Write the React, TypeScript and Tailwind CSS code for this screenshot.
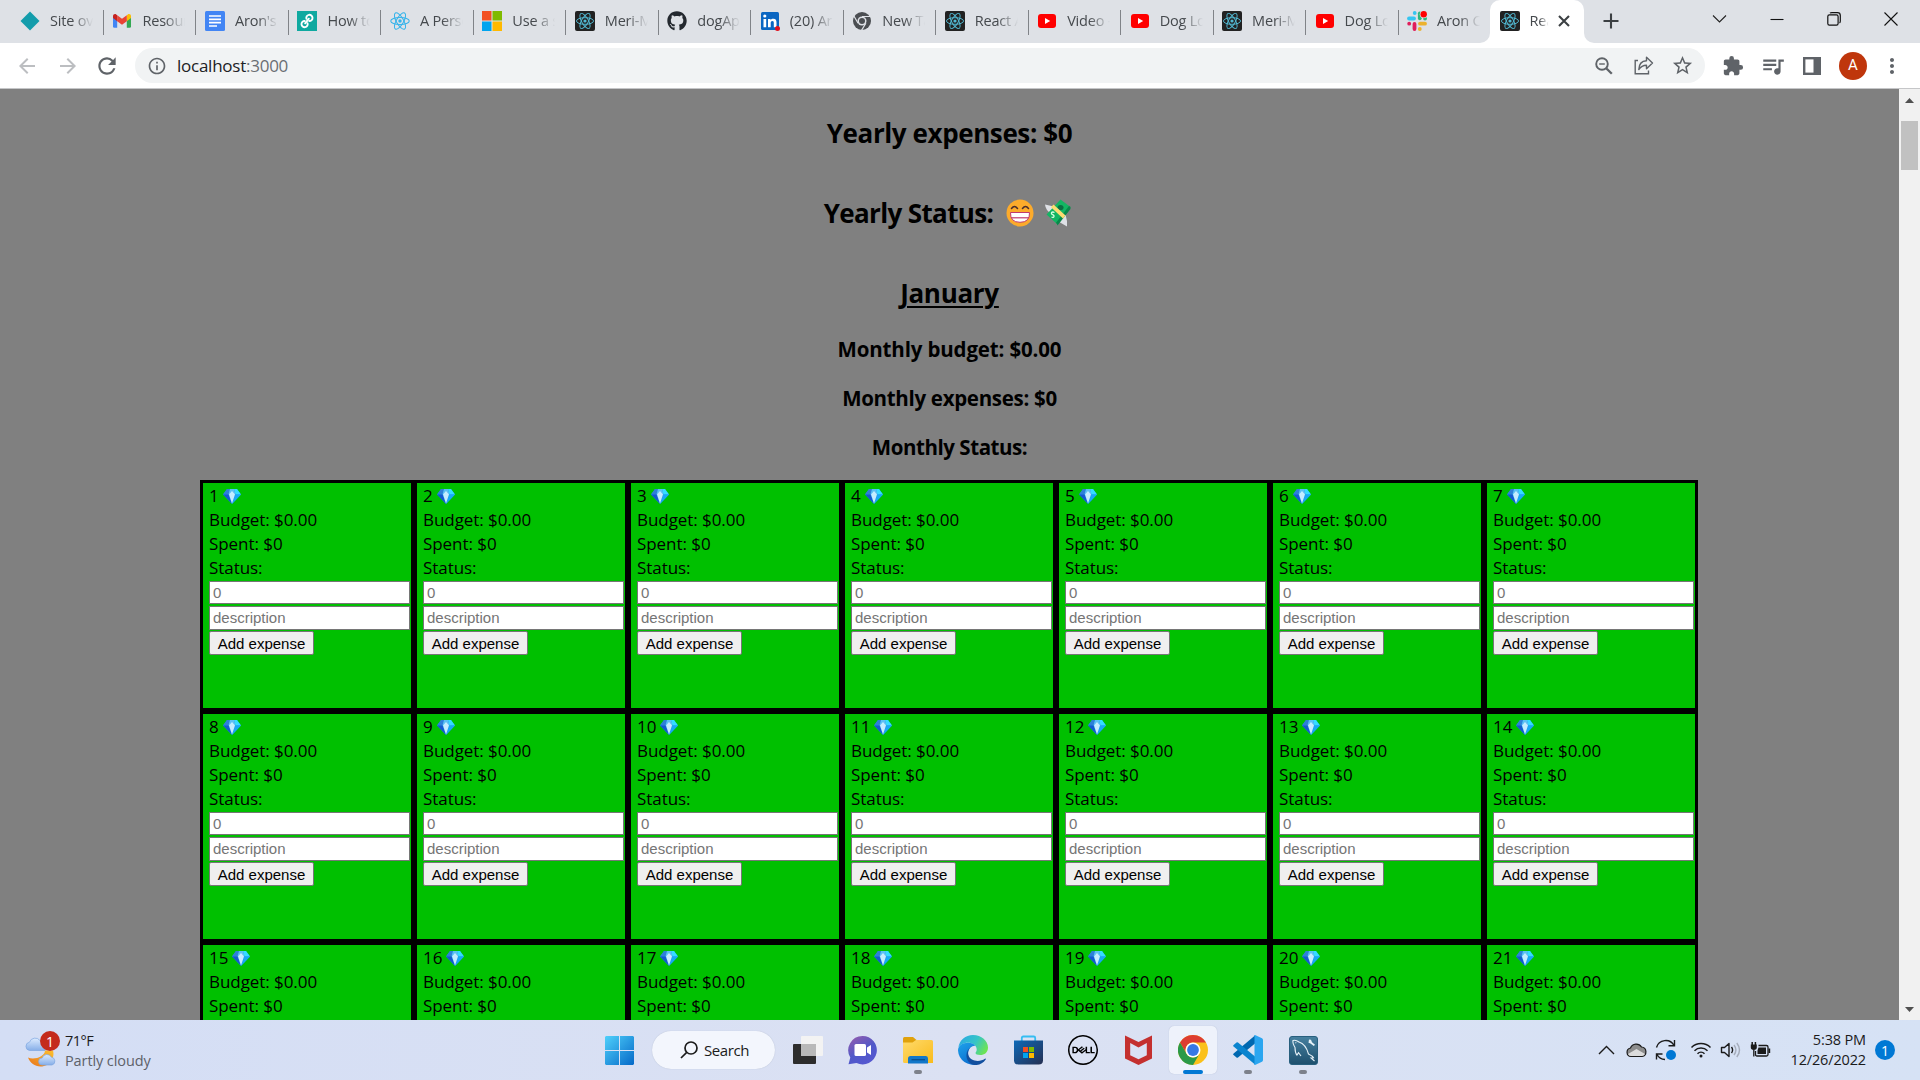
import React from "react";
import { FaGithub } from "react-icons/fa";
import { SiDell } from "react-icons/si";
import {
  MdArrowBack,
  MdArrowForward,
  MdRefresh,
  MdInfoOutline,
  MdStarBorder,
  MdExtension,
  MdQueueMusic,
  MdMoreVert,
} from "react-icons/md";

/* ---------- favicons ---------- */

const DiamondFav = () => (
  <svg width="20" height="20" viewBox="0 0 20 20">
    <path d="M10 .5 19.5 10 10 19.5.5 10z" fill="#139cab" />
  </svg>
);

const GmailFav = () => (
  <svg width="20" height="20" viewBox="0 0 20 20">
    <path d="M1 5v10.500a1.300 1.300 0 0 0 1.300 1.300H5.200V8.200z" fill="#4285f4" />
    <path d="M19 5v10.500a1.300 1.300 0 0 1-1.300 1.300H14.800V8.200z" fill="#34a853" />
    <path d="M14.800 4.200v6l4.200-3.200V5c0-1.700-1.900-2.600-3.200-1.600z" fill="#fbbc04" />
    <path d="M5.200 10.200V4.200L10 7.800l4.800-3.600v6L10 13.800z" fill="#ea4335" />
    <path d="M1 5v2l4.200 3.200v-6l-1-.8C2.900 2.400 1 3.300 1 5z" fill="#c5221f" />
  </svg>
);

const DocsFav = () => (
  <svg width="20" height="20" viewBox="0 0 20 20">
    <rect width="20" height="20" rx="1.500" fill="#4285f4" />
    <path d="M4 5h12M4 8.300h12M4 11.700h12M4 15h8" stroke="#fff" strokeWidth="1.700" />
  </svg>
);

const LinkFav = () => (
  <svg width="20" height="20" viewBox="0 0 20 20">
    <rect width="20" height="20" fill="#0fa9a0" />
    <g transform="rotate(38 10 10)" fill="none" stroke="#fff" strokeWidth="1.900" strokeLinecap="round">
      <path d="M11.800 8.600a3.100 3.100 0 1 0-3.600 0" />
      <path d="M8.200 11.400a3.100 3.100 0 1 0 3.600 0" />
      <path d="M10 7v6" />
    </g>
  </svg>
);

const Atom = ({ color, scale }: { color: string; scale: number }) => (
  <g transform={`translate(10 10) scale(${scale})`} fill="none" stroke={color} strokeWidth="1">
    <ellipse rx="9" ry="3.500" />
    <ellipse rx="9" ry="3.500" transform="rotate(60)" />
    <ellipse rx="9" ry="3.500" transform="rotate(120)" />
    <circle r="1.700" fill={color} stroke="none" />
  </g>
);

const ReactFav = () => (
  <svg width="20" height="20" viewBox="0 0 20 20">
    <Atom color="#35b3ea" scale={1.03} />
  </svg>
);

const ReactDarkFav = () => (
  <svg width="20" height="20" viewBox="0 0 20 20">
    <rect width="20" height="20" rx="2" fill="#222" />
    <Atom color="#52b9d3" scale={0.95} />
  </svg>
);

const MsFav = () => (
  <svg width="20" height="20" viewBox="0 0 20 20">
    <path d="M0 0h9.500v9.500H0z" fill="#f25022" />
    <path d="M10.500 0H20v9.500h-9.500z" fill="#7fba00" />
    <path d="M0 10.500h9.500V20H0z" fill="#00a4ef" />
    <path d="M10.500 10.500H20V20h-9.500z" fill="#ffb900" />
  </svg>
);

const GithubFav = () => <FaGithub size={20} color="#24292f" />;

const LinkedInFav = () => (
  <svg width="20" height="20" viewBox="0 0 20 20">
    <rect x="1" y="1" width="18" height="18" rx="1.500" fill="#0a66c2" />
    <path d="M3.500 8h2.700v8.200H3.500zM8 8h2.600v1.200c.5-.9 1.500-1.400 2.700-1.400 2.600 0 3.200 1.600 3.200 4v4.400h-2.700v-4c0-1.200-.2-2.100-1.500-2.100s-1.600 1-1.600 2.100v4H8z" fill="#fff" />
    <circle cx="4.800" cy="5" r="1.600" fill="#fff" />
    <circle cx="17.500" cy="17.500" r="2.500" fill="#e0101d" />
  </svg>
);

const ChromeGreyFav = () => (
  <svg width="20" height="20" viewBox="0 0 20 20">
    <circle cx="10" cy="10" r="9" fill="#4b4e52" />
    <circle cx="10" cy="10" r="4.500" fill="#dee1e6" />
    <path d="M10 5.500h8.500M6.100 12.200 1.900 5M13.900 12.300 9.500 19.400" stroke="#dee1e6" strokeWidth="1.200" />
    <circle cx="10" cy="10" r="3" fill="#4b4e52" />
  </svg>
);

const YoutubeFav = () => (
  <svg width="20" height="20" viewBox="0 0 20 20">
    <rect x="1" y="3" width="18" height="14" rx="3" fill="#f00" />
    <path d="M8 7v6l5.200-3z" fill="#fff" />
  </svg>
);

const SlackFav = () => (
  <svg width="20" height="20" viewBox="0 0 20 20">
    <g strokeWidth="3.800" strokeLinecap="round">
      <path d="M2 7.500h5" stroke="#36c5f0" />
      <path d="M7.700 2v0" stroke="#36c5f0" />
      <path d="M12.800 2.300v5" stroke="#2eb67d" />
      <path d="M18 7.500h.1" stroke="#2eb67d" />
      <path d="M13 12.700h5" stroke="#ecb22e" />
      <path d="M12.800 18v0" stroke="#ecb22e" />
      <path d="M7.500 13v5" stroke="#e01e5a" />
      <path d="M2.200 12.700h0" stroke="#e01e5a" />
    </g>
    <circle cx="16.700" cy="3.300" r="3.900" fill="#dee1e6" />
    <circle cx="16.700" cy="3.300" r="3.200" fill="#f00" />
  </svg>
);

const tabs: { icon: React.FC; title: string }[] = [
  { icon: DiamondFav, title: "Site ov" },
  { icon: GmailFav, title: "Resour" },
  { icon: DocsFav, title: "Aron's" },
  { icon: LinkFav, title: "How to" },
  { icon: ReactFav, title: "A Perso" },
  { icon: MsFav, title: "Use a s" },
  { icon: ReactDarkFav, title: "Meri-M" },
  { icon: GithubFav, title: "dogAp" },
  { icon: LinkedInFav, title: "(20) Ar" },
  { icon: ChromeGreyFav, title: "New Ta" },
  { icon: ReactDarkFav, title: "React A" },
  { icon: YoutubeFav, title: "Video -" },
  { icon: YoutubeFav, title: "Dog Lo" },
  { icon: ReactDarkFav, title: "Meri-M" },
  { icon: YoutubeFav, title: "Dog Lo" },
  { icon: SlackFav, title: "Aron C" },
];

/* ---------- browser chrome ---------- */

const TabStrip = () => (
  <div className="flex h-[43px] bg-[#dee1e6] pl-[11.500px] text-[14.500px] text-[#45494d]">
    {tabs.map(({ icon: Icon, title }, i) => (
      <div key={i} className="flex h-[42px] w-[92.470px] shrink-0 items-center pl-[8.500px]">
        <div className="flex w-5 shrink-0 justify-center">
          <Icon />
        </div>
        <div className="ml-2.5 w-[44px] overflow-hidden pb-px whitespace-nowrap tracking-[-0.200px] [mask-image:linear-gradient(to_right,#000_50%,transparent_98%)]">
          {title}
        </div>
        <div className={i < 15 ? "mt-[2px] ml-auto h-[25px] w-px bg-[#808388]" : "hidden"} />
      </div>
    ))}
    <div className="-ml-[11.500px] flex h-[43px] w-[114px] shrink-0">
      <div className="w-[10px] bg-white">
        <div className="h-full rounded-br-[10px] bg-[#dee1e6]" />
      </div>
      <div className="flex w-[94px] items-center rounded-t-[10px] bg-white pb-px pl-[10px]">
        <ReactDarkFav />
        <div className="ml-2.5 w-[19px] overflow-hidden pb-px whitespace-nowrap tracking-[-0.200px] [mask-image:linear-gradient(to_right,#000_50%,transparent_98%)]">
          Rea
        </div>
        <svg className="ml-[9px]" width="12" height="12" viewBox="0 0 12 12" stroke="#3c4043" strokeWidth="2.100">
          <path d="m1 1 10 10M11 1 1 11" />
        </svg>
      </div>
      <div className="w-[10px] bg-white">
        <div className="h-full rounded-bl-[10px] bg-[#dee1e6]" />
      </div>
    </div>
    <svg className="mt-[13px] ml-[9px] shrink-0" width="16" height="16" viewBox="0 0 16 16" stroke="#3c4043" strokeWidth="2.100">
      <path d="M8 .5v15M.5 8h15" />
    </svg>
    <div className="mr-[22px] ml-auto flex h-[37px] items-center gap-[43px]">
      <svg width="15" height="14" viewBox="0 0 15 14" fill="none" stroke="#222" strokeWidth="1.100">
        <path d="m1 3.500 6.500 6.500L14 3.500" />
      </svg>
      <svg width="14" height="14" viewBox="0 0 14 14" fill="none" stroke="#111" strokeWidth="1.100">
        <path d="M.5 7.500h13" />
      </svg>
      <svg width="14" height="14" viewBox="0 0 14 14" fill="none" stroke="#111" strokeWidth="1.200">
        <rect x=".8" y="2.800" width="10.300" height="10.300" rx="1.600" />
        <path d="M3 1.200Q3.500.7 5 .7h5.500Q13.300.7 13.300 3.500V9q0 1.500-.8 2" />
      </svg>
      <svg width="14" height="14" viewBox="0 0 14 14" fill="none" stroke="#111" strokeWidth="1.100">
        <path d="m.5.500 13 13M13.500.5l-13 13" />
      </svg>
    </div>
  </div>
);

const Toolbar = () => (
  <div className="flex h-[46px] items-center border-b border-[#c5c6c8] bg-white pl-[15px] text-[#5f6368]">
    <MdArrowBack size={24} color="#bcbec1" />
    <MdArrowForward size={24} color="#bcbec1" className="ml-[17px]" />
    <MdRefresh size={26} className="ml-[14px]" />
    <div className="ml-[15px] flex h-[35px] w-[1570px] items-center rounded-full bg-[#f1f3f4] pl-[12px]">
      <MdInfoOutline size={20} />
      <div className="ml-[10px] text-[17px] leading-[35px] tracking-[-0.250px] text-[#6a6e73]">
        <span className="text-[#202124]">localhost</span>:3000
      </div>
      <div className="mr-[11px] ml-auto flex items-center gap-[17px]">
        <svg width="18" height="18" viewBox="0 0 18 18" fill="none" stroke="#5f6368" strokeWidth="1.900">
          <circle cx="7" cy="7" r="5.800" />
          <path d="m11.200 11.200 5.600 5.600" strokeWidth="2.300" />
          <path d="M4.200 7h5.600" strokeWidth="1.400" />
        </svg>
        <svg className="ml-[4px]" width="20" height="19" viewBox="0 0 20 19" fill="none" stroke="#5f6368" strokeWidth="1.400">
          <path d="M4 4.500H1.200v13.300h13.300v-3.300" />
          <path d="M12.500 1.200v3.600C7.500 5 5 8.500 4.800 13.500c2-3 4.200-4.200 7.700-4.200v3.500L18.500 7z" strokeLinejoin="round" />
        </svg>
        <MdStarBorder size={23} />
      </div>
    </div>
    <MdExtension size={22} className="ml-[17px]" />
    <MdQueueMusic size={26} className="ml-[16px]" />
    <svg className="ml-[17px]" width="18" height="18" viewBox="0 0 18 18">
      <rect x="1.200" y="1.200" width="15.600" height="15.600" fill="none" stroke="#5f6368" strokeWidth="2.400" />
      <path d="M10.500 0H18v18h-7.500z" fill="#5f6368" />
    </svg>
    <div className="ml-[18px] flex h-7 w-7 items-center justify-center rounded-full bg-[#bf360c] font-[Roboto] text-[15px] text-white">
      A
    </div>
    <MdMoreVert size={24} className="ml-[13px]" />
  </div>
);

/* ---------- page content ---------- */

const Gem = () => (
  <svg width="18" height="15" viewBox="0 0 18 15">
    <path d="M4 0h10l4 5.500L9 15 0 5.500z" fill="#1b8fe8" />
    <path d="M4 0h3L5.500 5.500H0z" fill="#2f7fd8" />
    <path d="M14 0h-3l1.500 5.500H18z" fill="#35dcff" />
    <path d="M7 0h4l1.500 5.500h-7z" fill="#5cc0f5" />
    <path d="M0 5.500h5.500L9 15z" fill="#1558cf" />
    <path d="M18 5.500h-5.500L9 15z" fill="#17a9f5" />
    <path d="m9 2 3 3.500L9 14.500 6 5.500z" fill="#c4ecff" />
  </svg>
);

const Grin = () => (
  <svg width="28" height="28" viewBox="0 0 28 28">
    <circle cx="14" cy="14" r="13.500" fill="#fcab2b" />
    <path d="M5.500 9.500q3-4 6 0M16.500 9.500q3-4 6 0" fill="none" stroke="#4a2d2c" strokeWidth="1.500" strokeLinecap="round" />
    <path d="M4.500 13.500h19q.5 9.800-9.500 9.800t-9.500-9.800z" fill="#fff" stroke="#c0396e" strokeWidth="1" />
    <path d="M5.200 18.800h17.600" stroke="#c0396e" strokeWidth="1.200" />
  </svg>
);

const FlyingMoney = () => (
  <svg width="27" height="28" viewBox="0 0 27 28">
    <path d="M1 5.500 12 8l-5 6.500Q1.500 11 1 5.500zM23 27.500 13.500 22l8-6.500q2 6 1.500 12z" fill="#dfe1e6" />
    <path d="M16.500.5 26.500 8 13 25 2.500 15.500z" fill="#12b562" />
    <path d="M26.500 8v2L13.500 26.500 13 25l-1-1.200L25 7z" fill="#08884a" />
    <ellipse cx="16.500" cy="8.500" rx="3" ry="2.600" fill="#0b6f43" />
    <path d="m9.500 5.500 12 11-2.500 3L7 8.300z" fill="#fcdc72" />
    <path d="M10.500 13.500c-3-1.500-4.200 1.200-1.800 2.200s1.200 3.500-1.200 2.300" fill="none" stroke="#d6ffe2" strokeWidth="1.300" />
  </svg>
);

const DayCell = ({ day }: { day: number }) => (
  <div className="h-[231px] w-[214px] overflow-hidden border-[3px] border-black bg-[#00c000] pt-px pl-[6px] text-[17px] leading-6 tracking-[-0.060px] text-black">
    <div className="flex h-6 items-center gap-[4px]">
      <span>{day}</span>
      <Gem />
    </div>
    <div>Budget: $0.00</div>
    <div>Spent: $0</div>
    <div>Status:</div>
    <input
      placeholder="0"
      className="mt-px block h-[23px] w-[201px] border border-[#767676] bg-white px-[3px] font-['Liberation_Sans',sans-serif] text-[15px] tracking-normal placeholder:text-[#757575]"
    />
    <input
      placeholder="description"
      className="mt-[2px] block h-6 w-[201px] border border-[#767676] bg-white px-[3px] font-['Liberation_Sans',sans-serif] text-[15px] tracking-normal placeholder:text-[#757575]"
    />
    <button className="mt-px block h-6 w-[105px] rounded-[2px] border border-[#767676] bg-[#efefef] text-center font-['Liberation_Sans',sans-serif] text-[15px] leading-[23px] tracking-normal">
      Add expense
    </button>
  </div>
);

const Page = () => (
  <div className="flex h-[931px] overflow-hidden">
    <div className="flex w-[1899px] flex-col items-center overflow-hidden bg-[#808080] text-black">
      <h2 className="mt-[26px] text-[26px] leading-9 font-bold tracking-[-0.400px]">Yearly expenses: $0</h2>
      <h2 className="mt-[44px] mr-[4px] flex items-center text-[26px] leading-9 font-bold tracking-[-0.650px]">
        <span className="mr-[13px]">Yearly Status:</span>
        <Grin />
        <span className="ml-[10px]">
          <FlyingMoney />
        </span>
      </h2>
      <h2 className="mt-[44px] text-[26px] leading-9 font-bold tracking-[-0.300px] underline decoration-2 underline-offset-[3px]">
        January
      </h2>
      <h3 className="mt-[24px] text-[20.500px] leading-7 font-bold tracking-[-0.150px]">Monthly budget: $0.00</h3>
      <h3 className="mt-[21px] text-[20.500px] leading-7 font-bold tracking-[-0.300px]">Monthly expenses: $0</h3>
      <h3 className="mt-[21px] text-[20.500px] leading-7 font-bold tracking-[-0.450px]">Monthly Status:</h3>
      <div className="mt-[19px] mr-px grid grid-cols-7">
        {Array.from({ length: 21 }, (_, i) => (
          <DayCell key={i} day={i + 1} />
        ))}
      </div>
    </div>
    <div className="flex w-[21px] flex-col items-center justify-between bg-[#f1f1f1] pt-[9px] pb-[8px]">
      <div className="flex flex-col items-center">
        <svg width="9" height="5" viewBox="0 0 9 5">
          <path d="M0 5 4.500 0 9 5z" fill="#505050" />
        </svg>
        <div className="mt-[18px] h-[49px] w-[17px] bg-[#c1c1c1]" />
      </div>
      <svg width="9" height="5" viewBox="0 0 9 5">
        <path d="M0 0 4.500 5 9 0z" fill="#505050" />
      </svg>
    </div>
  </div>
);

/* ---------- taskbar ---------- */

const WeatherIcon = () => (
  <svg width="36" height="36" viewBox="0 0 36 36">
    <defs>
      <linearGradient id="cloud" x1="0" y1="0" x2="0" y2="1">
        <stop offset="0" stopColor="#dcebff" />
        <stop offset="1" stopColor="#86aee8" />
      </linearGradient>
      <linearGradient id="moon" x1="0" y1="1" x2="1" y2="0">
        <stop offset="0" stopColor="#e8741c" />
        <stop offset="1" stopColor="#fcc02e" />
      </linearGradient>
    </defs>
    <path d="M4.500 18.500a4.200 4.200 0 0 1 0-8.300A6 6 0 0 1 15 8.500a4.500 4.500 0 0 1 5 4.500v5.500z" fill="url(#cloud)" stroke="#7ea6e0" strokeWidth=".7" />
    <path d="M3 25.500c6 3 17-1 17-7h8a12.500 12.500 0 0 1-9 15.500C12 36 5.500 32 3 25.500z" fill="url(#moon)" />
    <path d="M17 33a3.500 3.500 0 0 1 .2-7 5 5 0 0 1 9.200-.8A4 4 0 0 1 27 33z" fill="url(#cloud)" stroke="#7ea6e0" strokeWidth=".7" />
  </svg>
);

const WindowsLogo = () => (
  <svg width="29" height="29" viewBox="0 0 29 29">
    <defs>
      <linearGradient id="win" x1="0" y1="0" x2="1" y2="1">
        <stop offset="0" stopColor="#4fd0fb" />
        <stop offset="1" stopColor="#0569c8" />
      </linearGradient>
    </defs>
    <path d="M1 0h13v14H0V1zM15 0h13l1 1v13H15zM0 15h14v14H1l-1-1zM15 15h14v13l-1 1H15z" fill="url(#win)" />
  </svg>
);

const TaskView = () => (
  <svg width="30" height="29" viewBox="0 0 30 29">
    <rect x="0" y="8" width="23" height="20" rx="1" fill="#2d2d2d" />
    <rect x="8" y="0" width="22" height="20" rx="1" fill="#f3f3f3" />
    <path d="M8 8h15v12H8z" fill="#b9b9b9" />
  </svg>
);

const ChatIcon = () => (
  <svg width="29" height="29" viewBox="0 0 29 29">
    <defs>
      <linearGradient id="chat" x1="0" y1="0" x2=".6" y2="1">
        <stop offset="0" stopColor="#9a5cab" />
        <stop offset=".6" stopColor="#5059c9" />
        <stop offset="1" stopColor="#5558d0" />
      </linearGradient>
    </defs>
    <path d="M14.500 0a14.200 14.200 0 1 1-6 27L.5 28.300l1.800-6.800A14.200 14.200 0 0 1 14.500 0z" fill="url(#chat)" />
    <rect x="6.500" y="8" width="11.500" height="12" rx="1.500" fill="#fff" />
    <path d="m19 11.500 4-2.500v10l-4-2.500z" fill="#fff" />
  </svg>
);

const FolderIcon = () => (
  <svg width="30" height="27" viewBox="0 0 30 27">
    <defs>
      <linearGradient id="folder" x1="0" y1="0" x2="1" y2="1">
        <stop offset="0" stopColor="#ffda6b" />
        <stop offset="1" stopColor="#f9bb1c" />
      </linearGradient>
    </defs>
    <path d="M0 1.500Q0 0 1.500 0H10l3.500 3v9H0z" fill="#e0a10c" />
    <path d="M0 5.500h9.500L13 3h15.500Q30 3 30 4.500V26H1.500Q0 26 0 24.500z" fill="url(#folder)" />
    <path d="M5 26.500v-5q0-2.500 2.500-2.500H23q2 0 2 2.500v5z" fill="#1277c9" />
    <path d="M8.500 22.700h13.500" stroke="#0b4f8e" strokeWidth="1.300" />
  </svg>
);

const EdgeIcon = () => (
  <svg width="30" height="30" viewBox="0 0 30 30">
    <defs>
      <linearGradient id="edgeA" x1="0" y1=".2" x2="1" y2=".6">
        <stop offset="0" stopColor="#2ba9e4" />
        <stop offset=".55" stopColor="#35c4c8" />
        <stop offset="1" stopColor="#6de452" />
      </linearGradient>
      <linearGradient id="edgeB" x1="0" y1="0" x2=".5" y2="1">
        <stop offset="0" stopColor="#1fa2ea" />
        <stop offset="1" stopColor="#0b6fd0" />
      </linearGradient>
    </defs>
    <path d="M.2 13C1.500 5 7.500 0 15 0c8.500 0 15 6 15 12.500 0 5-3.600 7.500-7.800 7.500-3 0-4.700-1-4.700-2 0-.8 1.200-1.200 1.200-3.500 0-4-4-6.700-8.700-6.700C5 7.800 1 10.500.2 13z" fill="url(#edgeA)" />
    <path d="M0 15.500C0 10.500 4.500 7.800 10 7.800c3.500 0 6 1.200 7.400 3-3-.4-7.400 2.400-7.400 8 0 6 5 10.500 9.500 10.200A15 15 0 0 1 0 15.500z" fill="url(#edgeB)" />
    <path d="M12.500 12.500c-3.500 3-3.200 9.500 1 11.800 4.600 2.600 10 1.800 13.400-.6.700-.4 1.200.1.800.8C25 28.500 20.500 30.500 16 30 11.500 29 8 25 8.500 19.500c.2-3.200 1.800-5.700 4-7z" fill="#114f9f" />
  </svg>
);

const StoreIcon = () => (
  <svg width="29" height="30" viewBox="0 0 29 30">
    <defs>
      <linearGradient id="store" x1="0" y1="0" x2="1" y2="1">
        <stop offset="0" stopColor="#0d69b8" />
        <stop offset="1" stopColor="#252f52" />
      </linearGradient>
    </defs>
    <path d="M7.800 6.500V3q0-1.500 1.500-1.500h10.400q1.500 0 1.500 1.500v3.500" fill="none" stroke="#35bdf2" strokeWidth="1.800" />
    <path d="M0 5.500h29v19.700q0 4.300-4.300 4.300H4.300Q0 29.500 0 25.200z" fill="url(#store)" />
    <path d="M9 12h5v5H9z" fill="#f25022" />
    <path d="M15 12h5v5h-5z" fill="#7fba00" />
    <path d="M9 18h5v5H9z" fill="#00a4ef" />
    <path d="M15 18h5v5h-5z" fill="#ffb900" />
  </svg>
);

const McAfeeIcon = () => (
  <svg width="27" height="30" viewBox="0 0 27 30">
    <path d="m0 .5 13.500 6.500L27 .5v23L13.500 30 0 23.500zM5.200 8v12.200l8.300 4 8.300-4V8l-8.300 4.500z" fill="#c4302f" />
  </svg>
);

const ChromeIcon = () => (
  <svg width="30" height="30" viewBox="0 0 30 30">
    <circle cx="15" cy="15" r="15" fill="#fbc11a" />
    <path d="M15 0A15 15 0 0 1 28 7.500H15a7.500 7.500 0 0 0-6.500 11.250L2 7.500A15 15 0 0 1 15 0z" fill="#dd3d31" />
    <path d="M2 7.500 8.500 18.750A7.500 7.500 0 0 0 15 22.500a7.500 7.500 0 0 0 6.500-3.750L15 30A15 15 0 0 1 2 7.500z" fill="#2b9a48" />
    <circle cx="15" cy="15" r="7.500" fill="#fff" />
    <circle cx="15" cy="15" r="5.900" fill="#3678e6" />
  </svg>
);

const VsCodeIcon = () => (
  <svg width="30" height="30" viewBox="0 0 30 30">
    <path d="m22 .5 0 8L5 22.500q-.8.600-1.500 0L.6 20q-.9-.8 0-1.600z" fill="#0068b0" />
    <path d="m22 29.500 0-8L5 7.500q-.8-.6-1.500 0L.6 10q-.9.8 0 1.600z" fill="#0a84cf" />
    <path d="m22 0 7 3.300q1 .5 1 1.700v20q0 1.200-1 1.700L22 30q-1.200.3-.5-1V1q-.7-1.300.5-1z" fill="#2ba6f0" />
  </svg>
);

const MySqlIcon = () => (
  <svg width="29" height="29" viewBox="0 0 29 29">
    <defs>
      <linearGradient id="sql" x1="0" y1="0" x2="0" y2="1">
        <stop offset="0" stopColor="#47809f" />
        <stop offset="1" stopColor="#1d4f6d" />
      </linearGradient>
    </defs>
    <rect x=".5" y=".5" width="28" height="28" rx="2.500" fill="url(#sql)" stroke="#285f7e" />
    <path d="M8 19.500c-1.500-2-2-5-2-8C4.500 9 3.500 6.500 4 4.500c2-.8 4 0 6 1.500 5 1.500 8 6.500 9.500 12 2 1 4 2 5 3.800l-2.500.2 3.500 3M8 19.500c.3-1.500.8-2 1.500-2.800L12 20M6.500 6.500l.7.600" fill="none" stroke="#e6f1f7" strokeWidth="1.100" />
    <path d="m20 3.500 2 .3 1 2.500 3 2.500-1.200 1.200-3.300-2.600-2-.7z" fill="#e6f1f7" />
  </svg>
);

const Slot = ({ children, mark }: { children: React.ReactNode; mark?: "idle" | "active" }) => (
  <div className="flex w-[55.100px] justify-center">
    <div
      className={
        mark === "active"
          ? "relative flex h-12 w-12 items-center justify-center rounded-[5px] bg-[#eef2fb] shadow-[0_0_1px_#aab4cc]"
          : "relative flex h-12 w-12 items-center justify-center"
      }
    >
      {children}
      {mark === "active" && <div className="absolute bottom-0 h-1 w-5 rounded-full bg-[#0078d4]" />}
      {mark === "idle" && <div className="absolute bottom-0 h-1 w-2 rounded-full bg-[#7d818b]" />}
    </div>
  </div>
);

const Tray = () => (
  <div className="ml-auto flex items-center pr-[25px]">
    <svg width="17" height="20" viewBox="0 0 17 20" fill="none" stroke="#1b1b1b" strokeWidth="1.400">
      <path d="m1 14 7.500-7.500L16 14" />
    </svg>
    <svg className="ml-[11px]" width="21" height="20" viewBox="0 0 21 20">
      <path d="M5 16.500a4.300 4.300 0 0 1-.5-8.500A6.200 6.200 0 0 1 15.500 7a4.800 4.800 0 0 1 .5 9.500z" fill="#8d8d8d" stroke="#1b1b1b" strokeWidth="1.200" />
      <path d="M2 14 10.500 9l8.500 5q-1 2-3 2H5q-2.300 0-3-2z" fill="#dcdcdc" />
    </svg>
    <svg className="ml-[8px]" width="22" height="22" viewBox="0 0 22 22" fill="none" stroke="#1b1b1b" strokeWidth="1.400">
      <path d="M1.500 8.500A9.500 9.500 0 0 1 19 6.500M19.500 1v5.800h-6M10 20.500a9.500 9.500 0 0 1-8-5M1.500 20.500v-5.500h6" />
      <circle cx="16" cy="16" r="5" fill="#0078d4" stroke="none" />
    </svg>
    <svg className="ml-[13px]" width="22" height="20" viewBox="0 0 22 20" fill="none" stroke="#1b1b1b" strokeWidth="1.500">
      <path d="M1.500 7.500a13.500 13.500 0 0 1 19 0M4.500 10.700a9.200 9.200 0 0 1 13 0M7.500 13.700a5 5 0 0 1 7 0" />
      <circle cx="11" cy="16" r="1.500" fill="#1b1b1b" stroke="none" />
    </svg>
    <svg className="ml-[8px]" width="22" height="20" viewBox="0 0 22 20" fill="none" stroke="#1b1b1b" strokeWidth="1.400">
      <path d="M1.500 7.500h3L9 3.500v13l-4.500-4h-3z" strokeLinejoin="round" />
      <path d="M11.500 7q2.200 3 0 6" />
      <path d="M14 5q3.800 5 0 10M16.800 3q5.400 7 0 14" stroke="#a6adbb" />
    </svg>
    <svg className="ml-[8px]" width="21" height="18" viewBox="0 0 21 18">
      <path d="M2.200 1v3M5.400 1v3" stroke="#1b1b1b" strokeWidth="1.500" />
      <path d="M.8 3.500h6v3q0 2-3 2.500-3-.5-3-2.500z" fill="#1b1b1b" />
      <path d="M3.800 9v6.500" stroke="#1b1b1b" strokeWidth="1.300" />
      <path d="M8.500 4.500h8q1.500 0 1.500 1.500v7.500q0 1.500-1.500 1.500H7q-1.500 0-1.500-1.500V10" fill="none" stroke="#1b1b1b" strokeWidth="1.300" />
      <path d="M8.500 6.500H16V13H7.500V9.500zM18.500 7.500h1.700v4.500h-1.700z" fill="#1b1b1b" />
    </svg>
    <div className="ml-[17px] w-[78px] text-right text-[14.500px] leading-5 tracking-[-0.150px] whitespace-nowrap text-[#1b1b1b]">
      <div>5:38 PM</div>
      <div>12/26/2022</div>
    </div>
    <div className="ml-[9px] flex h-5 w-5 items-center justify-center rounded-full bg-[#0078d4] text-[14px] text-white">1</div>
  </div>
);

const Taskbar = () => (
  <div className="grid h-[60px] grid-cols-[592px_740px_1fr] items-center bg-linear-to-r from-[#d4def5] via-[#dbe1f3] to-[#d6e2f5]">
    <div className="flex items-center pl-[25px]">
      <div className="relative">
        <WeatherIcon />
        <div className="absolute -top-[1px] left-[15px] flex h-5 w-5 items-center justify-center rounded-full bg-[#c42b1c] text-[14px] text-white">
          1
        </div>
      </div>
      <div className="ml-[4px] pt-px text-[14.500px] leading-5 tracking-[-0.100px]">
        <div className="tracking-[-0.500px] text-[#1b1b1b]">71°F</div>
        <div className="text-[#5d6169]">Partly cloudy</div>
      </div>
    </div>
    <div className="flex items-center">
      <Slot>
        <WindowsLogo />
      </Slot>
      <div className="mx-[5px] flex h-[38px] w-[123px] items-center rounded-full bg-[#f3f6fd] pl-[28px] text-[15px] tracking-[-0.450px] text-[#1b1b1b] shadow-[0_0_1px_#a9b2c8]">
        <svg width="18" height="18" viewBox="0 0 18 18" fill="none" stroke="#1b1b1b" strokeWidth="1.700">
          <circle cx="11" cy="7" r="6" />
          <path d="m6.700 11.300-5.700 5.700" />
        </svg>
        <span className="ml-[6px]">Search</span>
      </div>
      <Slot>
        <TaskView />
      </Slot>
      <Slot>
        <ChatIcon />
      </Slot>
      <Slot mark="idle">
        <FolderIcon />
      </Slot>
      <Slot>
        <EdgeIcon />
      </Slot>
      <Slot>
        <StoreIcon />
      </Slot>
      <Slot>
        <SiDell size={30} color="#000" />
      </Slot>
      <Slot>
        <McAfeeIcon />
      </Slot>
      <Slot mark="active">
        <ChromeIcon />
      </Slot>
      <Slot mark="idle">
        <VsCodeIcon />
      </Slot>
      <Slot mark="idle">
        <MySqlIcon />
      </Slot>
    </div>
    <Tray />
  </div>
);

export default function App() {
  return (
    <div className="h-[1080px] w-[1920px] overflow-hidden font-['Open_Sans','Noto_Sans',sans-serif]">
      <TabStrip />
      <Toolbar />
      <Page />
      <Taskbar />
    </div>
  );
}
